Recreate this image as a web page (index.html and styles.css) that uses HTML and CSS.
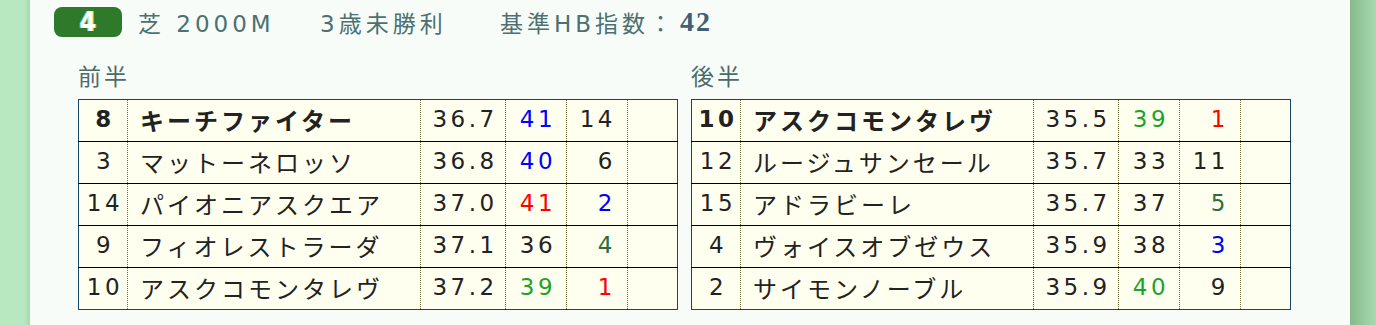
FILE: index.html
```html
<!DOCTYPE html>
<html lang="ja">
<head>
<meta charset="utf-8">
<link rel="stylesheet" href="styles.css">
</head>
<body>
<div class="page">
  <div class="side-left"></div>
  <main class="panel">
    <header class="race-head">
      <span class="badge">4</span>
      <span class="info info-course">芝 2000M</span>
      <span class="info info-class">3歳未勝利</span>
      <span class="info info-base">基準HB指数：<b class="base-val">42</b></span>
    </header>
    <div class="halves">
      <section class="half">
        <h2 class="half-title">前半</h2>
        <table class="rank-table">
          <tr class="top"><td class="c-num">8</td><td class="c-name">キーチファイター</td><td class="c-time">36.7</td><td class="c-idx blue">41</td><td class="c-rank">14</td><td class="c-blank"></td></tr>
          <tr><td class="c-num">3</td><td class="c-name">マットーネロッソ</td><td class="c-time">36.8</td><td class="c-idx blue">40</td><td class="c-rank">6</td><td class="c-blank"></td></tr>
          <tr><td class="c-num">14</td><td class="c-name">パイオニアスクエア</td><td class="c-time">37.0</td><td class="c-idx red">41</td><td class="c-rank blue">2</td><td class="c-blank"></td></tr>
          <tr><td class="c-num">9</td><td class="c-name">フィオレストラーダ</td><td class="c-time">37.1</td><td class="c-idx">36</td><td class="c-rank dgreen">4</td><td class="c-blank"></td></tr>
          <tr><td class="c-num">10</td><td class="c-name">アスクコモンタレヴ</td><td class="c-time">37.2</td><td class="c-idx green">39</td><td class="c-rank red">1</td><td class="c-blank"></td></tr>
        </table>
      </section>
      <section class="half">
        <h2 class="half-title">後半</h2>
        <table class="rank-table">
          <tr class="top"><td class="c-num">10</td><td class="c-name">アスクコモンタレヴ</td><td class="c-time">35.5</td><td class="c-idx green">39</td><td class="c-rank red">1</td><td class="c-blank"></td></tr>
          <tr><td class="c-num">12</td><td class="c-name">ルージュサンセール</td><td class="c-time">35.7</td><td class="c-idx">33</td><td class="c-rank">11</td><td class="c-blank"></td></tr>
          <tr><td class="c-num">15</td><td class="c-name">アドラビーレ</td><td class="c-time">35.7</td><td class="c-idx">37</td><td class="c-rank dgreen">5</td><td class="c-blank"></td></tr>
          <tr><td class="c-num">4</td><td class="c-name">ヴォイスオブゼウス</td><td class="c-time">35.9</td><td class="c-idx">38</td><td class="c-rank blue">3</td><td class="c-blank"></td></tr>
          <tr><td class="c-num">2</td><td class="c-name">サイモンノーブル</td><td class="c-time">35.9</td><td class="c-idx green">40</td><td class="c-rank">9</td><td class="c-blank"></td></tr>
        </table>
      </section>
    </div>
  </main>
  <div class="side-right"></div>
</div>
</body>
</html>
```

FILE: styles.css
```css
html, body {
  margin: 0;
  padding: 0;
  background: #f7fcf9;
}
.page {
  display: flex;
  width: 1376px;
  height: 325px;
  overflow: hidden;
}
.side-left {
  width: 30px;
  flex: none;
  background: linear-gradient(to right, #b8e8c0 0, #b8e8c0 24px, #a6d8ae 30px);
}
.side-right {
  width: 26px;
  flex: none;
  background: linear-gradient(to right, #86b98b, #a6dbad);
}
.panel {
  flex: 1;
  background: #f7fcf9;
  padding: 7px 0 0 24px;
  box-sizing: border-box;
  font-family: "DejaVu Sans", "Noto Sans CJK JP", sans-serif;
}
.race-head {
  display: flex;
  align-items: center;
  height: 30px;
  color: #4d7070;
  font-size: 23px;
  letter-spacing: 4px;
}
.badge {
  width: 68px;
  height: 30px;
  border-radius: 8px;
  background: #2e7a2a;
  color: #fff;
  display: flex;
  align-items: center;
  justify-content: center;
  font-family: "Liberation Sans Narrow", "DejaVu Sans Condensed", sans-serif;
  font-weight: bold;
  font-size: 26px;
  letter-spacing: 0;
  text-shadow: -1px 0 #7ad0ff, 1px 0 #e8c050;
}
.info-course {
  margin-left: 16px;
  width: 182px;
}
.info-class {
  width: 180px;
}
.info-base {
  display: flex;
  align-items: center;
}
.base-val {
  margin-left: 4px;
  font-family: "Liberation Serif", "DejaVu Serif", serif;
  font-weight: bold;
  font-size: 28px;
  color: #3e5f76;
  letter-spacing: 2px;
}
.halves {
  display: flex;
  gap: 13px;
  margin-left: 24px;
  margin-top: 25px;
}
.half {
  width: 600px;
}
.half-title {
  margin: 0 0 6px 0;
  font-weight: normal;
  font-size: 23px;
  line-height: 31px;
  letter-spacing: 3px;
  color: #4d6a6a;
}
.rank-table {
  border-collapse: collapse;
  width: 600px;
  border: 1px solid #124866;
  background: #fffff0;
  color: #222;
  font-size: 23px;
  letter-spacing: 3.5px;
}
.rank-table td {
  height: 42px;
  padding: 0 0 3px 0;
  border-left: 1px dotted #6b6b3a;
  border-top: 1px solid #000;
  white-space: nowrap;
  box-sizing: border-box;
}
.rank-table tr:first-child td {
  border-top: none;
}
.rank-table td:first-child {
  border-left: none;
}
.top .c-num, .top .c-name {
  font-weight: bold;
}
.c-num { width: 49px; text-align: center; padding-left: 4px !important; }
.c-name { width: 293px; padding-left: 12px !important; font-size: 24px; letter-spacing: 3px; }
.c-time { width: 85px; text-align: center; padding-left: 4px !important; }
.c-idx { width: 61px; text-align: center; padding-left: 4px !important; }
.c-rank { width: 61px; text-align: right; padding-right: 11px !important; }
.c-blank { width: 50px; }
.blue { color: #0000ff; }
.red { color: #ff0000; }
.green { color: #1ea22e; }
.dgreen { color: #2b6e3e; }
```
